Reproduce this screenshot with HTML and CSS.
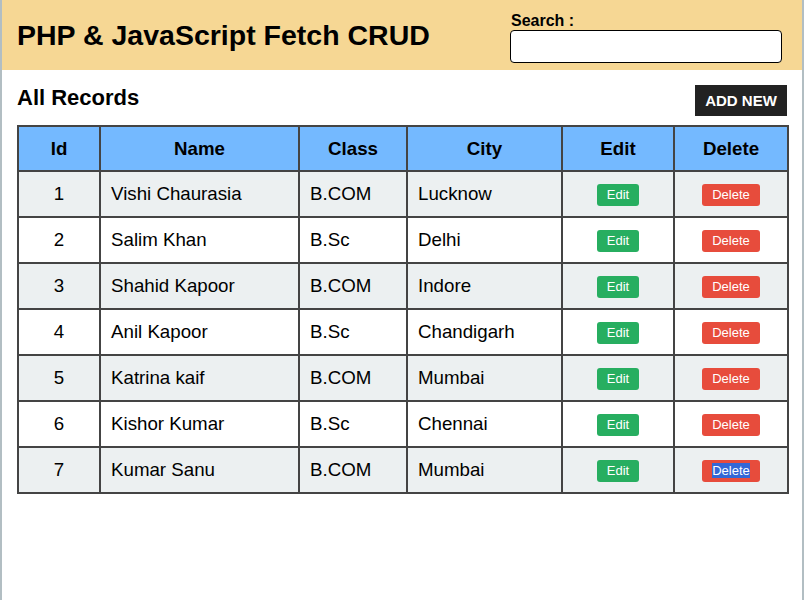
FILE: index.html
```html
<!DOCTYPE html>
<html>
<head>
<meta charset="utf-8">
<title>PHP &amp; JavaScript Fetch CRUD</title>
<link rel="stylesheet" href="styles.css">
</head>
<body>
<div class="container">
  <header class="header">
    <h1 class="title">PHP &amp; JavaScript Fetch CRUD</h1>
    <div class="search">
      <label class="search-label" for="search">Search :</label>
      <input class="search-input" id="search" type="text">
    </div>
  </header>
  <main class="content">
    <div class="toolbar">
      <h2 class="section-title">All Records</h2>
      <button class="add-btn">ADD NEW</button>
    </div>
    <table class="records">
      <colgroup>
        <col class="c-id"><col class="c-name"><col class="c-class"><col class="c-city"><col class="c-edit"><col class="c-del">
      </colgroup>
      <thead>
        <tr><th>Id</th><th>Name</th><th>Class</th><th>City</th><th>Edit</th><th>Delete</th></tr>
      </thead>
      <tbody>
        <tr><td class="center">1</td><td>Vishi Chaurasia</td><td>B.COM</td><td>Lucknow</td><td class="center"><button class="btn edit">Edit</button></td><td class="center"><button class="btn del">Delete</button></td></tr>
        <tr><td class="center">2</td><td>Salim Khan</td><td>B.Sc</td><td>Delhi</td><td class="center"><button class="btn edit">Edit</button></td><td class="center"><button class="btn del">Delete</button></td></tr>
        <tr><td class="center">3</td><td>Shahid Kapoor</td><td>B.COM</td><td>Indore</td><td class="center"><button class="btn edit">Edit</button></td><td class="center"><button class="btn del">Delete</button></td></tr>
        <tr><td class="center">4</td><td>Anil Kapoor</td><td>B.Sc</td><td>Chandigarh</td><td class="center"><button class="btn edit">Edit</button></td><td class="center"><button class="btn del">Delete</button></td></tr>
        <tr><td class="center">5</td><td>Katrina kaif</td><td>B.COM</td><td>Mumbai</td><td class="center"><button class="btn edit">Edit</button></td><td class="center"><button class="btn del">Delete</button></td></tr>
        <tr><td class="center">6</td><td>Kishor Kumar</td><td>B.Sc</td><td>Chennai</td><td class="center"><button class="btn edit">Edit</button></td><td class="center"><button class="btn del">Delete</button></td></tr>
        <tr><td class="center">7</td><td>Kumar Sanu</td><td>B.COM</td><td>Mumbai</td><td class="center"><button class="btn edit">Edit</button></td><td class="center"><button class="btn del"><span class="selected">Delete</span></button></td></tr>
      </tbody>
    </table>
  </main>
</div>
</body>
</html>
```
FILE: styles.css
```css
* { box-sizing: border-box; }
html, body { height: 100%; }
body {
  margin: 0;
  background: #b2bec3;
  font-family: "Liberation Sans", Arial, sans-serif;
  color: #000;
}
.container {
  width: 800px;
  min-height: 100%;
  margin: 0 auto;
  background: #fff;
}
.header {
  height: 70px;
  background: #f6d794;
  display: flex;
  align-items: center;
  justify-content: space-between;
  padding: 0 20px 0 15px;
}
.title {
  margin: 0;
  font-size: 28.5px;
  font-weight: bold;
  line-height: 32px;
}
.search {
  display: flex;
  flex-direction: column;
  margin-top: 5px;
  width: 272px;
}
.search-label {
  font-size: 16px;
  font-weight: bold;
  line-height: 18px;
  padding-left: 1px;
}
.search-input {
  height: 33px;
  width: 272px;
  border: 1px solid #000;
  border-radius: 4px;
  background: #fff;
  padding: 0 8px;
  font-size: 16px;
}
.content {
  padding: 15px 15px;
}
.toolbar {
  display: flex;
  align-items: center;
  justify-content: space-between;
  margin-bottom: 9px;
}
.section-title {
  margin: 0;
  font-size: 22px;
  line-height: 26px;
  font-weight: bold;
  position: relative;
  top: -3px;
}
.add-btn {
  background: #222;
  color: #fff;
  border: 0;
  font-family: "Liberation Sans", Arial, sans-serif;
  font-size: 15px;
  font-weight: bold;
  line-height: 17px;
  padding: 7px 10px;
  width: 92px;
  height: 31px;
}
.records {
  width: 770px;
  border-collapse: collapse;
  table-layout: fixed;
  font-size: 18.72px;
}
.c-id { width: 82px; }
.c-name { width: 199px; }
.c-class { width: 108px; }
.c-city { width: 155px; }
.c-edit { width: 112px; }
.c-del { width: 114px; }
.records th, .records td {
  border: 2px solid #444;
}
.records th {
  background: #74b9ff;
  font-weight: bold;
  text-align: center;
  height: 45px;
  padding: 0 5px;
  line-height: 21px;
}
.records td {
  height: 46px;
  padding: 0 10px;
  line-height: 22px;
  text-align: left;
}
.records tbody tr:nth-child(odd) td { background: #ecf0f1; }
.records tbody tr:nth-child(even) td { background: #fff; }
.records td.center { text-align: center; }
.btn {
  border: 0;
  border-radius: 3px;
  color: #fff;
  font-family: "Liberation Sans", Arial, sans-serif;
  font-size: 13px;
  line-height: 15px;
  height: 22px;
  vertical-align: middle;
}
.btn.edit { background: #27ae60; width: 42px; padding: 3px 0; }
.btn.del { background: #e74c3c; width: 58px; padding: 3px 0; }
.selected { background: #3367d6; color: #fff; }
```
